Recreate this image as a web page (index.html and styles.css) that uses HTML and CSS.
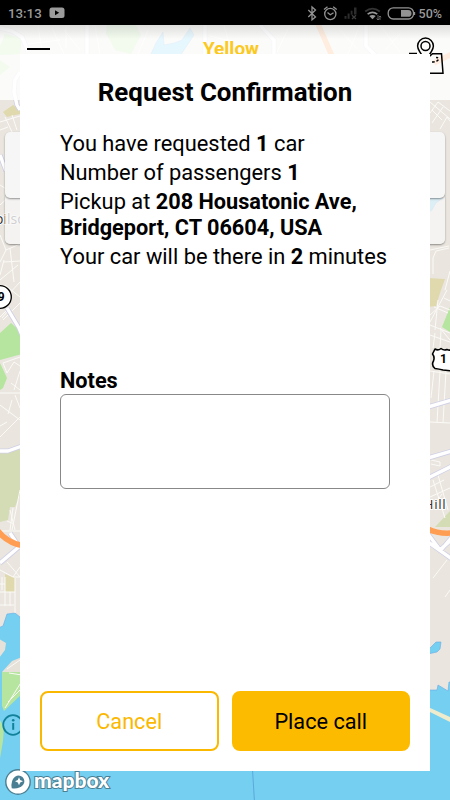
FILE: index.html
```
<!DOCTYPE html>
<html lang="en">
<head>
  <meta charset="UTF-8" />
  <meta name="viewport" content="width=device-width, initial-scale=1.0"/>
  <title>Yellow - Request Confirmation</title>
  <link rel="stylesheet" href="styles.css">
</head>
<body>
  <div class="screen">
    <!-- Map background -->
    <svg class="map" viewBox="0 0 450 800" aria-hidden="true">
      <rect width="450" height="800" fill="#eae6df"/>
      <!-- Water -->
      <g fill="#75cff0" stroke="#6aa9e6" stroke-width=".6">
        <path d="M-2 628L3 626L7 614L15 613L20 617L40 690H430L437 690L438 685L448 691L449 682H452V802H-2Z"/>
        <path d="M150 56L156 43L163 32L164 45L174 43L182 40L190 28L194 35L180 56Z"/>
        <path d="M428 198H443L436 203L432 210L428 213Z"/>
        <path d="M428 650L436 642H441L440 649L437 652L428 654Z"/>
        <path d="M13 469L16 465.500L20 469L16 472.500Z"/>
      </g>
      <circle cx="16" cy="469" r="3.300" fill="#75cff0"/>
      <!-- Land and parks -->
      <path d="M-1 639L6 643L5 650L-1 658ZM2 672L12 661L22 657V673Z" fill="#e6e1d9"/>
      <path d="M5 34L22 38L20 54L0 55V46ZM0 60L10 67L0 75ZM107 25H136L141 35L131 54L115 50L106 33ZM0 333L11 323L22 333V354L0 360ZM0 363L7 378L3 388L0 390ZM450 307L442 327L450 332ZM2 672H22V694L4 711L2 706ZM-1 718L4 728L3 741L-1 764Z" fill="#b5e59e"/>
      <path d="M0 452L22 447V490L15 507H10L8 520L0 522ZM435 527L450 511V527Z" fill="#d4dcb5"/>
      <path d="M3 112L13 105L22 111L20 114L7 117ZM428 278L445 279L441 290L436 306L428 307ZM5 574L15 578V592H5Z" fill="#e0d9ae"/>
      <path d="M428 707L452 718V723L428 711Z" fill="#eeeccc"/>
      <!-- Small streets -->
      <g class="streets">
        <path d="M0 122L20 116M5 117L12 132M12 115L17 130M0 130L8 127M28 44L60 40M38 26L42 50M52 28L64 54M64 30L80 50M66 26V48M95 26L100 54M148 30L138 54M210 36L235 42M224 25L232 54M290 25L276 54M340 30L360 52M360 25L348 54M380 25L400 52M400 34L385 50"/>
        <path d="M0 185L8 190M0 205L12 194M0 235L6 250L0 262M6 250L20 244M4 260L0 275M4 262L20 261M10 248L14 282M0 280L18 265M7 310L0 317M2 318L7 312M3 320L20 303M8 295L20 282M5 285L20 297"/>
        <path d="M20 357L3 363L7 373L14 362L20 366M14 390L20 371M11 383L20 390M0 393L20 393M0 405L20 420M15 395L20 408M0 437L20 417M0 426L7 422M12 400L8 414M20 490L12 530M0 531H20M10 510L15 530M13 508L10 530M7 521L14 524"/>
        <path d="M0 570L13 577L20 567M7 562L20 577M15 578V613M5 577V606M0 592H15M0 605H14M10 592V606M0 584H5M2 577V590M13 577H20"/>
        <path d="M430 113L438 102L450 111M430 102L450 119M432 123L443 107M440 129L447 117L450 121M432 110L442 120M430 250L449 246M433 274V258L436 251L449 248M445 290L450 271M430 315L440 306L450 310M447 290L430 322M444 298L450 301M430 325L450 333M434 307L448 313M438 300L435 330M430 371L450 374M430 422L450 423M434 371L431 398M440 371L437 423M446 371L443 423M440 328L450 340M430 335L450 342M435 333L433 348M441 330L440 348"/>
        <path d="M431 460L440 462V466L431 464M430 487L444 480M430 497L450 488M438 475L448 510M433 480L445 518M430 510L442 494M447 560L433 578M450 590L445 597"/>
      </g>
      <!-- Main roads -->
      <g class="road-edge">
        <path d="M0 28L12 31L22 37L28 51M20 72L15 80L14 92L17 105L20 110M87 25V54M205 25V54M260 25L274 40V56M366 25V46L380 60M0 155L6 171M7 308L19 328L22 335M-1 451H8L22 446M0 563L20 546M10 533L20 548M428 407L452 400M428 458L452 451M428 478L452 466M428 534L440 550L452 539M428 542L452 559M441 550L452 537"/>
      </g>
      <g class="road">
        <path d="M0 28L12 31L22 37L28 51M20 72L15 80L14 92L17 105L20 110M87 25V54M205 25V54M260 25L274 40V56M366 25V46L380 60M0 155L6 171M7 308L19 328L22 335M-1 451H8L22 446M0 563L20 546M10 533L20 548M428 407L452 400M428 458L452 451M428 478L452 466M428 534L440 550L452 539M428 542L452 559M441 550L452 537"/>
      </g>
      <g class="trails">
        <path d="M5 708L22 681M8 702L22 688M9 673L22 675M7 669L20 660"/>
      </g>
      <g class="highway">
        <path d="M-2 531Q7 543 24 546M318 24L332 56M428 529Q438 534 452 533M434 63L452 54"/>
      </g>
      <path d="M252.500 770L254.500 802" stroke="#5ba9df" fill="none"/>
      <!-- Place names and route shields -->
      <text class="place" x="-5" y="224">oilso</text>
      <text class="place place-right" x="423.500" y="509">Hill</text>
      <circle cx="0" cy="297" r="11.300" fill="#fff" stroke="#000" stroke-width="1.300"/>
      <text class="shield" x="-2.200" y="300.500">9</text>
      <path d="M435 349Q438 351 441 348.500Q444 351 447 349.500Q450 351 453 349V371L443 370Q439 369 435 368.500Q431 365 433.500 361Q435 357 432.500 354Z" fill="#fff" stroke="#000" stroke-width="1.600"/>
      <text class="shield" x="440" y="363">1</text>
    </svg>

    <!-- Status bar -->
    <div class="status-bar">
      <div class="status-group">
        <span>13:13</span>
        <svg class="youtube" width="16" height="12" viewBox="0 0 16 12">
          <rect x=".5" y=".5" width="15" height="10.500" rx="2.500" fill="#9b9b9b"/>
          <path d="M6 3.200L10.200 5.700L6 8.200Z" fill="#000"/>
        </svg>
      </div>
      <svg class="status-icons" width="112" height="18" viewBox="305 3 112 18" fill="none" stroke="#929292" stroke-width="1.300">
        <path d="M308.300 9L315.500 16L312 18.800V6L315.500 9L308.300 16"/>
        <circle cx="330.300" cy="13" r="5.600"/>
        <path d="M327.500 11.500L330.300 13.800L333.500 11.800M324 8.500L327.500 5.700M333.200 5.700L336.700 8.500"/>
        <g fill="#2c2c2c" stroke="none">
          <rect x="344.500" y="15" width="2" height="2.800"/>
          <rect x="347.600" y="12.500" width="2" height="5.300"/>
          <rect x="350.700" y="9.700" width="1.800" height="4"/>
          <rect x="354" y="6.500" width="2.500" height="7"/>
        </g>
        <path d="M352 14.300L356 18M356 14.300L352 18" stroke="#3c3c3c"/>
        <path d="M365.200 10.500Q372.500 4.800 379.800 10.500" stroke="#343434" stroke-width="1.800"/>
        <path d="M367.600 13.200Q372.500 9.500 377.300 13.200" stroke="#969696" stroke-width="1.600"/>
        <path d="M369.300 15Q372.500 13 375.700 15L372.500 18.200Z" fill="#969696" stroke="none"/>
        <path d="M378 14V19M376.600 17.500L378 19L379.400 17.500M380 19V15M378.800 16.200L380 15L381.200 16.200" stroke="#777" stroke-width=".8"/>
        <rect x="388.200" y="6.800" width="25.300" height="11.200" rx="5"/>
        <path d="M401 9H408Q411.500 9 411.500 12.400T408 15.800H401Z" fill="#929292" stroke="none"/>
        <path d="M414.500 11V14"/>
      </svg>
      <span class="battery">50%</span>
    </div>

    <!-- App header -->
    <div class="header">
      <div class="menu"></div>
      <div class="logo">Yellow</div>
      <svg class="map-icon" width="40" height="40" viewBox="406 36 40 40" fill="none" stroke="#000" stroke-width="1.500">
        <path d="M425.500 60Q417.600 50 417.600 46A7.900 7.900 0 0 1 433.400 46Q433.400 50 425.500 60"/>
        <circle cx="425.500" cy="46" r="4.500"/>
        <path d="M409 53.500H417M432.500 53.800H441.500L443 73.200H410Z"/>
        <path d="M432 62Q437 62 438.500 59.500T434 57.500" stroke-dasharray="2.500 2"/>
      </svg>
    </div>

    <div class="address-cards">
      <div class="address-card"></div>
      <div class="address-card last"></div>
    </div>

    <!-- Map attribution -->
    <svg class="info" width="22" height="22" viewBox="0 0 22 22" fill="none" stroke="#128199">
      <circle cx="11" cy="11" r="9.800" stroke-width="1.800"/>
      <path d="M11.200 9V15.800" stroke-width="2"/>
      <circle cx="11.200" cy="6.300" r="1.300" fill="#128199" stroke="none"/>
    </svg>
    <div class="mapbox">
      <svg width="26" height="26" viewBox="0 0 26 26">
        <circle cx="13" cy="13" r="12.200" fill="#fff" stroke="#4b7f93" stroke-width="1.400"/>
        <path d="M6.700 19.300Q5.500 11.500 10 7.800Q14 5 17.500 8Q21 12 18 16Q14.300 20.300 6.700 19.300Z" fill="#4a7f93"/>
        <path d="M14 8.200L15.200 11L18 12.200L15.200 13.400L14 16.200L12.800 13.400L10 12.200L12.800 11Z" fill="#fff"/>
      </svg>
      <span>mapbox</span>
    </div>

    <!-- Confirmation dialog -->
    <div class="modal">
      <h2>Request Confirmation</h2>
      <div class="details">
        <p>You have requested <b>1</b> car</p>
        <p>Number of passengers <b>1</b></p>
        <p>Pickup at <b>208 Housatonic Ave, Bridgeport, CT 06604, USA</b></p>
        <p>Your car will be there in <b>2</b> minutes</p>
      </div>
      <div class="form-group">
        <label for="notes">Notes</label>
        <textarea id="notes"></textarea>
      </div>
      <div class="btn-container">
        <button class="cancel">Cancel</button>
        <button class="submit">Place call</button>
      </div>
    </div>
  </div>
</body>
</html>
```
FILE: styles.css
```
* {
  box-sizing: border-box;
}

body {
  margin: 0;
  font-family: Roboto, "Liberation Sans", sans-serif;
  color: #000;
}

.screen {
  position: relative;
  width: 450px;
  height: 800px;
  overflow: hidden;
}

.map {
  position: absolute;
  top: 0;
  left: 0;
  width: 450px;
  height: 800px;
}

.map path {
  stroke-linejoin: round;
}

.streets path,
.trails path {
  fill: none;
  stroke: #fbfaf7;
  stroke-width: 1;
}

.road-edge path {
  fill: none;
  stroke: #cfcfe6;
  stroke-width: 5;
}

.road path {
  fill: none;
  stroke: #fff;
  stroke-width: 3.4;
}

.highway path {
  fill: none;
  stroke: #ff9d52;
  stroke-width: 5.5;
}

.place {
  font-family: "Open Sans", sans-serif;
  font-size: 14px;
  fill: #333;
  stroke: #fff;
  stroke-width: 2px;
  paint-order: stroke;
}

.place-right {
  font-size: 13.5px;
  letter-spacing: 0.7px;
}

.shield {
  font-size: 12px;
  font-weight: bold;
}

.status-bar {
  position: relative;
  display: flex;
  align-items: center;
  height: 25px;
  padding: 1px 8px 0 8px;
  background: #000;
  color: #9a9a9a;
  font-size: 13.3px;
  font-weight: 500;
}

.status-group {
  display: flex;
  flex: 1;
  align-items: center;
  gap: 7px;
}

.battery {
  margin-left: 2px;
  font-size: 12.5px;
}

.header {
  position: relative;
  display: flex;
  justify-content: space-between;
  height: 75px;
  padding: 11px 4px 0 27px;
  background: linear-gradient(rgba(120, 120, 120, 0.22), rgba(255, 255, 255, 0) 14px), rgba(255, 255, 255, 0.82);
}

.menu {
  width: 23px;
  height: 20px;
  margin-top: 12px;
  border-top: 2px solid #000;
}

.logo {
  margin-left: 6px;
  padding-top: 2px;
  color: #fbc91f;
  font-size: 19px;
  font-weight: bold;
  line-height: 22px;
}

.address-cards {
  position: relative;
  margin: 32px 5px 0;
}

.address-card {
  position: relative;
  z-index: 1;
  height: 66px;
  border-radius: 5px;
  background: #f6f6f6;
  box-shadow: 0 1px 2px rgba(0, 0, 0, 0.4);
}

.address-card.last {
  z-index: 0;
  height: 51px;
  margin-top: -5px;
  background: rgba(246, 246, 246, 0.8);
}

.info {
  position: absolute;
  top: 714px;
  left: 2px;
}

.mapbox {
  position: absolute;
  top: 769px;
  left: 5px;
  display: flex;
  align-items: center;
  gap: 3px;
}

.mapbox span {
  margin-top: -4px;
  color: #fff;
  font-family: Lato, sans-serif;
  font-size: 21px;
  font-weight: 900;
  line-height: 24px;
  -webkit-text-stroke: 2px #4b7f93;
  paint-order: stroke fill;
}

.modal {
  position: absolute;
  z-index: 2;
  top: 54px;
  left: 20px;
  display: flex;
  flex-direction: column;
  width: 410px;
  height: 717px;
  padding: 22px 20px 20px;
  background: #fff;
}

h2 {
  margin: 0 0 23px;
  text-align: center;
  font-size: 25.9px;
  line-height: 32px;
}

.details {
  height: 184px;
  padding: 0 20px;
  font-size: 21.85px;
  line-height: 26px;
}

.details p {
  margin: 0 0 3px;
}

.details b {
  font-size: 21.7px;
}

.form-group {
  flex: 1;
  padding: 53px 20px 0;
}

label {
  display: block;
  font-size: 21.7px;
  font-weight: bold;
  line-height: 26px;
}

textarea {
  display: block;
  width: 330px;
  height: 95px;
  border: 1px solid #888;
  border-radius: 6px;
  background: #fff;
  resize: none;
}

.btn-container {
  display: flex;
  gap: 13px;
}

button {
  flex: 1;
  height: 60px;
  border: 2px solid #fbb800;
  border-radius: 8px;
  font-family: inherit;
  font-size: 21.7px;
}

.cancel {
  background: #fff;
  color: #fbb800;
}

.submit {
  background: #fdbb00;
  border-color: #fdbb00;
  color: #000;
}
```
